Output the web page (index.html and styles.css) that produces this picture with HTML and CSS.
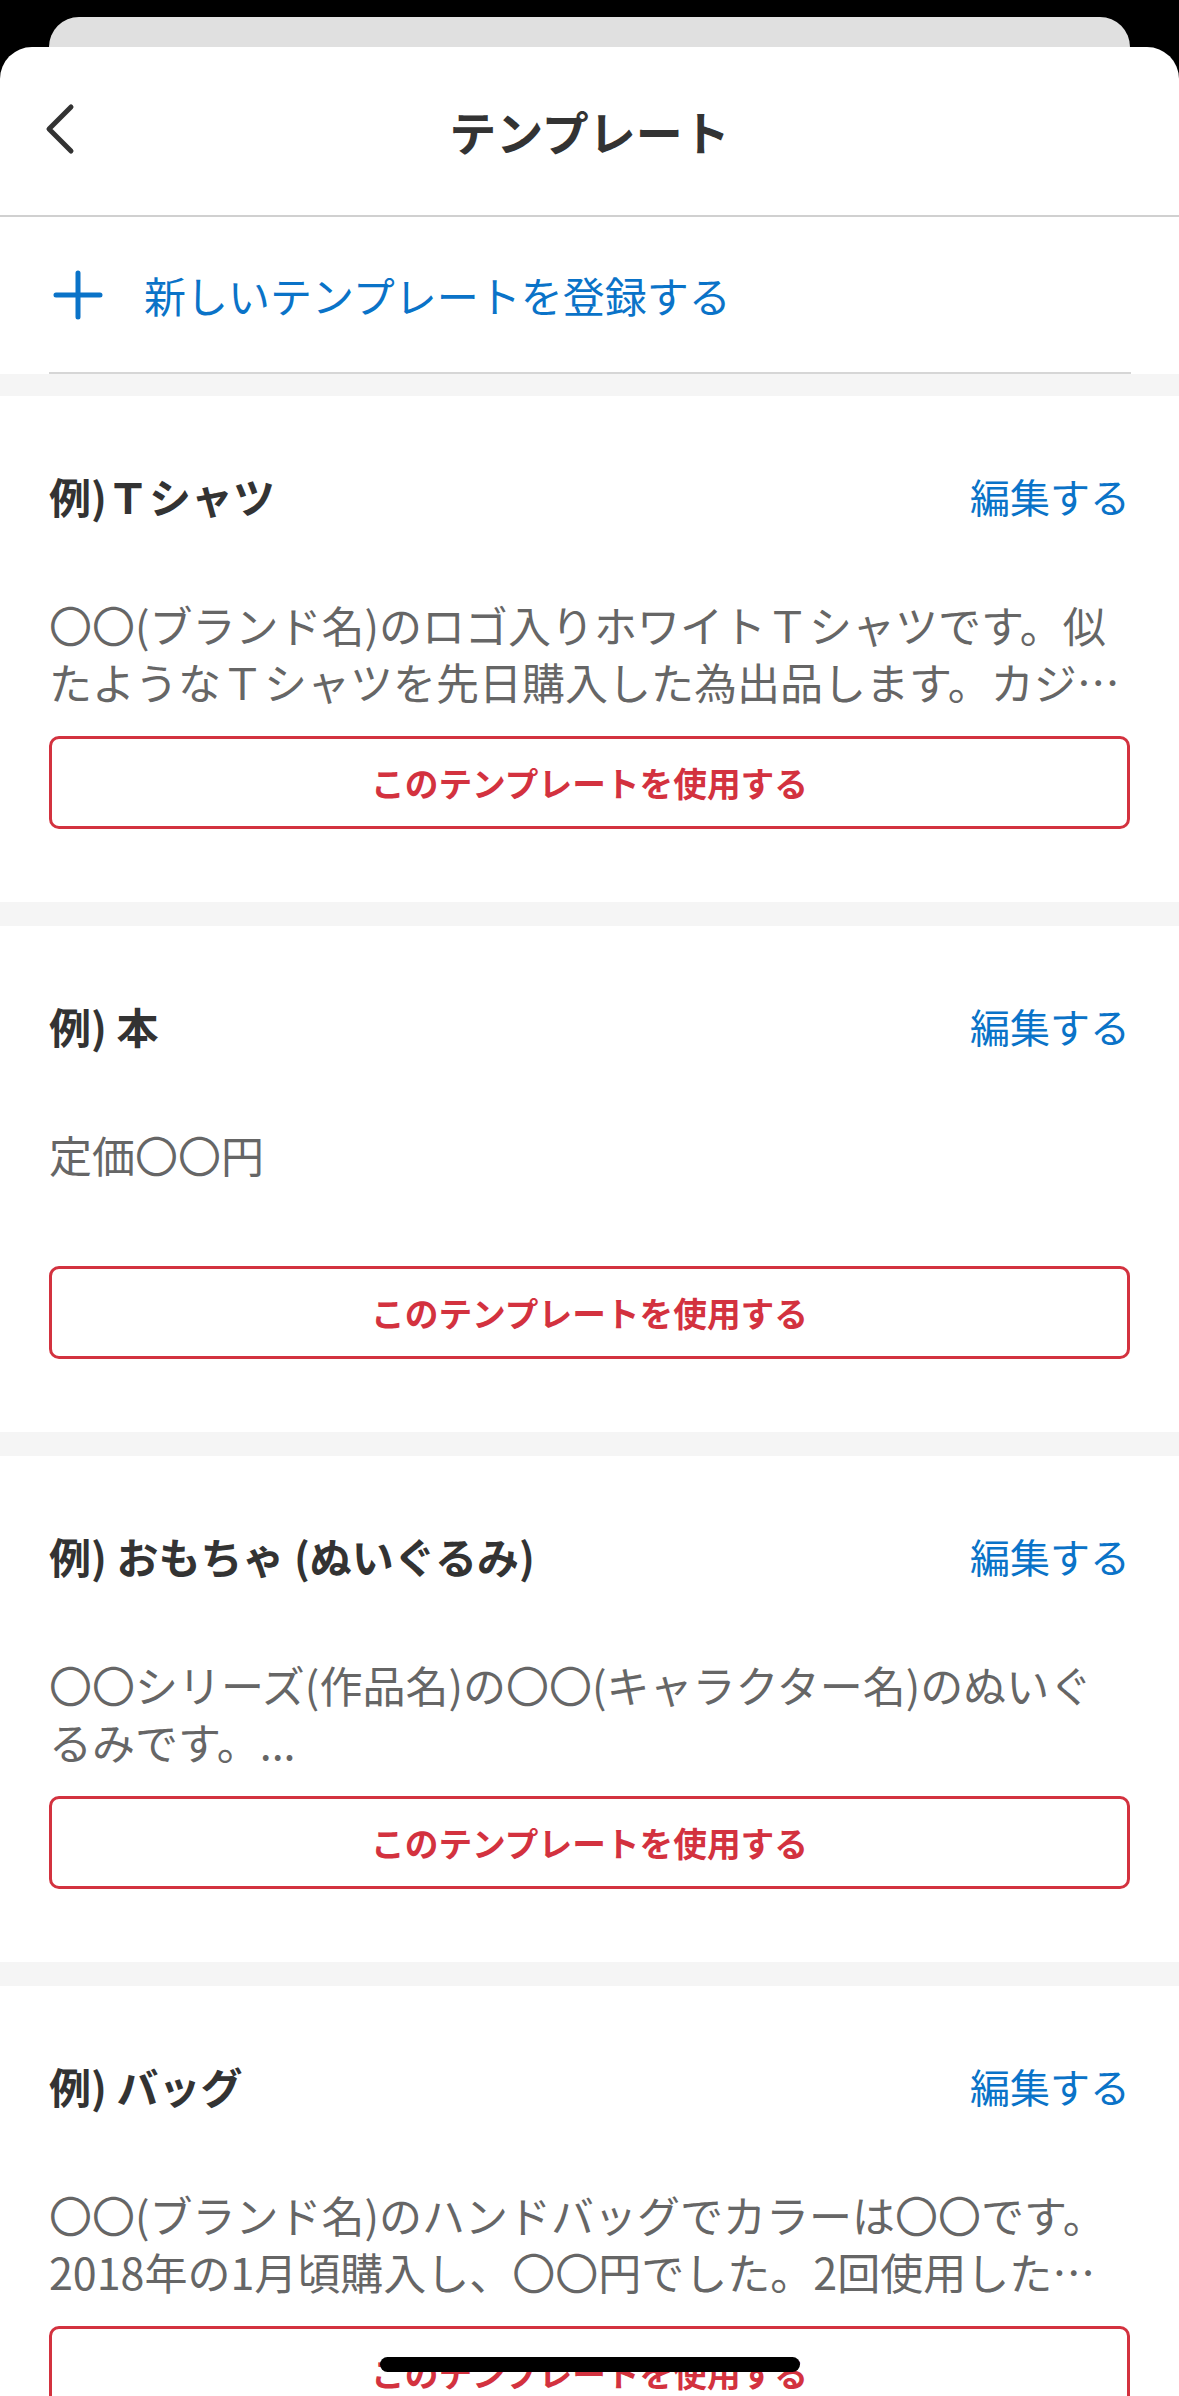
FILE: index.html
```html
<!DOCTYPE html>
<html lang="ja">
<head>
<meta charset="utf-8">
<title>テンプレート</title>
<link rel="stylesheet" href="styles.css">
</head>
<body>
<div class="screen">
  <div class="behind-card"></div>
  <div class="sheet">
    <header class="nav">
      <div class="nav-left">
        <svg class="back" width="30" height="54" viewBox="0 0 30 54" aria-hidden="true">
          <path d="M26 5 L4 27 L26 49" fill="none" stroke="#333" stroke-width="5" stroke-linecap="round" stroke-linejoin="round"/>
        </svg>
      </div>
      <h1 class="nav-title">テンプレート</h1>
      <div class="nav-right"></div>
    </header>

    <div class="add-row">
      <svg class="plus" width="50" height="50" viewBox="0 0 50 50" aria-hidden="true">
        <path d="M25 3 V47 M3 25 H47" fill="none" stroke="#0a73c8" stroke-width="5" stroke-linecap="round"/>
      </svg>
      <span class="add-text">新しいテンプレートを登録する</span>
    </div>

    <main class="list">
      <section class="card">
        <div class="card-head">
          <h2 class="card-title">例)Ｔシャツ</h2>
          <a class="edit">編集する</a>
        </div>
        <p class="card-body">〇〇(ブランド名)のロゴ入りホワイトＴシャツです。似<br>たようなＴシャツを先日購入した為出品します。カジ…</p>
        <button class="use-btn">このテンプレートを使用する</button>
      </section>

      <section class="card">
        <div class="card-head">
          <h2 class="card-title">例) 本</h2>
          <a class="edit">編集する</a>
        </div>
        <p class="card-body">定価〇〇円</p>
        <button class="use-btn">このテンプレートを使用する</button>
      </section>

      <section class="card">
        <div class="card-head">
          <h2 class="card-title">例) おもちゃ (ぬいぐるみ)</h2>
          <a class="edit">編集する</a>
        </div>
        <p class="card-body">〇〇シリーズ(作品名)の〇〇(キャラクター名)のぬいぐ<br>るみです。...</p>
        <button class="use-btn">このテンプレートを使用する</button>
      </section>

      <section class="card">
        <div class="card-head">
          <h2 class="card-title">例) バッグ</h2>
          <a class="edit">編集する</a>
        </div>
        <p class="card-body">〇〇(ブランド名)のハンドバッグでカラーは〇〇です。<br>2018年の1月頃購入し、〇〇円でした。2回使用した…</p>
        <button class="use-btn">このテンプレートを使用する</button>
      </section>
    </main>
  </div>
  <div class="home-indicator"></div>
</div>
</body>
</html>
```
FILE: styles.css
```css
* { box-sizing: border-box; }

html, body {
  margin: 0;
  padding: 0;
  background: #000;
}

body {
  font-family: "Noto Sans CJK JP", "Noto Sans", sans-serif;
  color: #333;
}

.screen {
  position: relative;
  width: 1179px;
  height: 2396px;
  overflow: hidden;
  background: #000;
}

.behind-card {
  margin: 17px 49px 0;
  height: 30px;
  background: #e0e0e0;
  border-radius: 30px 30px 0 0;
}

.sheet {
  background: #fff;
  border-radius: 32px 32px 0 0;
}

.nav {
  height: 170px;
  border-bottom: 2px solid #d0d0d0;
  display: grid;
  grid-template-columns: 1fr auto 1fr;
  align-items: center;
  padding: 0 45px 0 45px;
}

.nav-left {
  display: flex;
  align-items: center;
}

.back { display: block; margin-top: -4px; }

.nav-title {
  margin: 0;
  font-size: 47px;
  font-weight: 700;
  color: #333;
  line-height: 60px;
}

.add-row {
  margin: 0 48px 0 49px;
  height: 157px;
  border-bottom: 2px solid #d6d6d6;
  display: flex;
  align-items: center;
  gap: 41px;
  padding-left: 4px;
}

.plus { display: block; flex: none; }

.add-text {
  font-size: 42px;
  color: #0a73c8;
  line-height: 60px;
}

.list {
  background: #f5f5f5;
  padding-top: 22px;
}

.card {
  background: #fff;
  padding: 70px 49px 73px;
  margin-bottom: 24px;
}

.card-head {
  height: 60px;
  display: flex;
  justify-content: space-between;
  align-items: center;
}

.card-title {
  margin: 0;
  font-size: 42px;
  font-weight: 700;
  color: #333;
  line-height: 60px;
}

.edit {
  font-size: 40px;
  color: #0a73c8;
  line-height: 60px;
}

.card-body {
  margin: 70px 0 0;
  height: 114px;
  font-size: 43px;
  line-height: 57px;
  color: #666;
  white-space: nowrap;
}

.use-btn {
  display: block;
  width: 100%;
  height: 93px;
  margin-top: 26px;
  background: #fff;
  border: 3px solid #d3323f;
  border-radius: 10px;
  color: #d3323f;
  font-family: "Noto Sans CJK JP", "Noto Sans", sans-serif;
  font-size: 33.7px;
  font-weight: 700;
  padding: 0;
}

.home-indicator {
  position: absolute;
  left: 380px;
  top: 2357px;
  width: 420px;
  height: 15px;
  border-radius: 8px;
  background: #000;
}
```
